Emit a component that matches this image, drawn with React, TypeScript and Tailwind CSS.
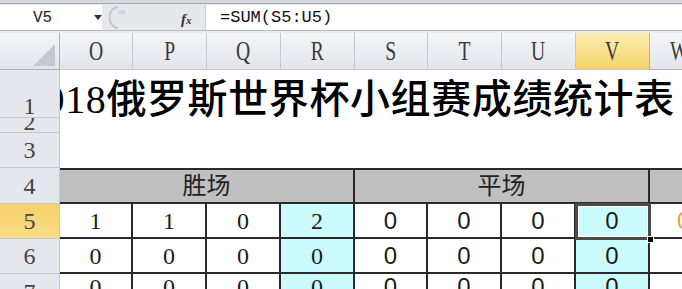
import React from "react";

const serif = { fontFamily: '"Liberation Serif", "Noto Sans CJK SC", serif' };
const sans = { fontFamily: '"Liberation Sans", "Noto Sans CJK SC", sans-serif' };
const mono = { fontFamily: '"Liberation Mono", monospace' };
const cjk = { fontFamily: '"Liberation Serif", "Noto Sans CJK SC", serif' };

const letters = ["O", "P", "Q", "R", "S", "T", "U", "V", "W"];

function ColHead({ l, sel, last }: { l: string; sel?: boolean; last?: boolean }) {
  return (
    <div
      className={
        "flex items-center justify-center overflow-hidden border-b border-[#aab1bb] " +
        (last ? "" : "border-r border-[#c4c9d1] ") +
        (sel
          ? "bg-gradient-to-b from-[#fdeeb3] to-[#f6d264] border-r-[#d9b24c]"
          : "bg-gradient-to-b from-[#f4f6f8] to-[#e1e5ea]")
      }
    >
      <span className={"inline-block text-[28px] leading-none text-[#3a3a3a] scale-x-[0.7] " + (last ? "ml-[26px]" : "")} style={serif}>
        {l}
      </span>
    </div>
  );
}

function RowHead({ n, sel, align = "center", h }: { n: string; sel?: boolean; align?: "center" | "end"; h?: string }) {
  return (
    <div
      className={
        "flex justify-center overflow-hidden border-b border-r border-[#c3c8d0] " +
        (align === "end" ? "items-end " : "items-center ") +
        (sel ? "bg-gradient-to-b from-[#f6d16a] to-[#f9dc85]" : "bg-[#e4e8ee]")
      }
    >
      <span className={"text-[24px] leading-none text-[#444] " + (h || "")} style={serif}>
        {n}
      </span>
    </div>
  );
}

function Cell({ v, cyan, font, last }: { v: string; cyan?: boolean; font: "serif" | "sans"; last?: boolean }) {
  return (
    <div
      className={
        "flex items-center justify-center border-b-2 border-[#2a2a2a] " +
        (last ? "" : "border-r-2 ") +
        (cyan ? "bg-[#ccfbfd]" : "bg-white")
      }
    >
      <span className="text-[24px] leading-none text-[#1c1c1c] mt-[1px]" style={font === "serif" ? serif : sans}>
        {v}
      </span>
    </div>
  );
}

export default function App() {
  const row5L = ["1", "1", "0", "2"];
  const row5R = ["0", "0", "0", "0"];
  const row6L = ["0", "0", "0", "0"];
  const row6R = ["0", "0", "0", "0"];
  return (
    <div className="w-[682px] h-[289px] overflow-hidden bg-white flex flex-col select-none">
      {/* Formula bar */}
      <div className="h-[33px] shrink-0 bg-[#e8eaed] flex flex-col">
        <div className="h-[4px] bg-[#d5d8dc] border-b border-[#a2a7ad]" />
        <div className="h-[25px] mt-[1px] flex">
          <div className="w-[102px] bg-white flex items-center relative">
            <span className="ml-[33px] text-[16px] text-[#222]" style={mono}>V5</span>
            <svg className="absolute left-[94px] top-[10px]" width="8" height="5" viewBox="0 0 8 5">
              <path d="M0 0 L8 0 L4 5 Z" fill="#333" />
            </svg>
          </div>
          <div className="w-[103px] bg-[#e6e8eb] flex items-center relative">
            <svg className="absolute left-[7px] top-[1px]" width="18" height="23" viewBox="0 0 18 23">
              <path d="M9 1 A8.5 10.5 0 0 0 9 22" fill="none" stroke="#c3c7cc" strokeWidth="2" />
              <rect x="9" y="4" width="8" height="5" rx="2" fill="#d4d7db" />
            </svg>
            <span className="absolute left-[79px] top-[3px] text-[15px] italic font-bold text-[#333]" style={serif}>
              f<span className="text-[11px]">x</span>
            </span>
          </div>
          <div className="flex-1 bg-white border-l border-[#c9ccd1] flex items-center">
            <span className="ml-[14px] text-[17px] text-[#111]" style={mono}>=SUM(S5:U5)</span>
          </div>
        </div>
        <div className="h-[1px] bg-[#b9bdc3]" />
      </div>

      {/* Sheet grid */}
      <div className="grid grid-cols-[60px_73px_74px_74px_74px_73px_74px_74px_74px_1fr] grid-rows-[37px_48px_15px_35px_36px_35px_35px_1fr] flex-1 relative">
        {/* corner */}
        <div className="bg-gradient-to-b from-[#f4f6f8] to-[#e1e5ea] border-r border-b border-[#aab1bb] relative">
          <svg className="absolute right-[4px] bottom-[3px]" width="22" height="22" viewBox="0 0 22 22">
            <path d="M22 0 L22 22 L0 22 Z" fill="#c5c9cf" />
          </svg>
        </div>
        {letters.map((l, i) => (
          <ColHead key={l} l={l} sel={l === "V"} last={i === letters.length - 1} />
        ))}

        {/* row 1 */}
        <RowHead n="1" align="end" h="-mb-[1px]" />
        <div className="col-span-9 row-span-3 overflow-hidden flex items-start">
          <div className="whitespace-nowrap text-[40px] tracking-[0.6px] leading-none text-black ml-[-36px] mt-[10px] font-medium" style={cjk}>
            2018俄罗斯世界杯小组赛成绩统计表
          </div>
        </div>
        <RowHead n="2" align="end" h="-mb-[2px]" />
        <RowHead n="3" />

        {/* row 4 */}
        <RowHead n="4" />
        <div className="col-span-4 bg-[#c0c0c0] border-t-2 border-b-2 border-r-2 border-[#2a2a2a] flex items-center justify-center">
          <span className="text-[24px] leading-none text-[#222]" style={cjk}>胜场</span>
        </div>
        <div className="col-span-4 bg-[#c0c0c0] border-t-2 border-b-2 border-r-2 border-[#2a2a2a] flex items-center justify-center">
          <span className="text-[24px] leading-none text-[#222]" style={cjk}>平场</span>
        </div>
        <div className="bg-[#c0c0c0] border-t-2 border-b-2 border-[#2a2a2a]" />

        {/* row 5 */}
        <RowHead n="5" sel />
        {row5L.map((v, i) => (
          <Cell key={"a" + i} v={v} cyan={i === 3} font="serif" />
        ))}
        {row5R.map((v, i) => (
          <Cell key={"b" + i} v={v} cyan={i === 3} font="sans" />
        ))}
        <div className="border-b-2 border-[#2a2a2a] bg-white overflow-hidden flex items-center">
          <span className="ml-[27px] text-[24px] leading-none text-[#e8a13a]" style={sans}>0</span>
        </div>

        {/* row 6 */}
        <RowHead n="6" />
        {row6L.map((v, i) => (
          <Cell key={"c" + i} v={v} cyan={i === 3} font="serif" />
        ))}
        {row6R.map((v, i) => (
          <Cell key={"d" + i} v={v} cyan={i === 3} font="sans" />
        ))}
        <div className="border-b-2 border-[#2a2a2a] bg-white" />

        {/* row 7 */}
        <RowHead n="7" align="end" h="-mb-[4px]" />
        {row6L.map((v, i) => (
          <Cell key={"e" + i} v={v} cyan={i === 3} font="serif" />
        ))}
        {row6R.map((v, i) => (
          <Cell key={"f" + i} v={v} cyan={i === 3} font="sans" />
        ))}
        <div className="bg-white" />

        {/* selection outline on V5 */}
        <div className="absolute left-[575px] top-[170px] w-[76px] h-[37px] border-[3px] border-[#4a4a4a] pointer-events-none">
          <div className="absolute inset-0 border border-white" />
        </div>
        <div className="absolute left-[647px] top-[203px] w-[7px] h-[7px] bg-black border border-white" />
      </div>
    </div>
  );
}
